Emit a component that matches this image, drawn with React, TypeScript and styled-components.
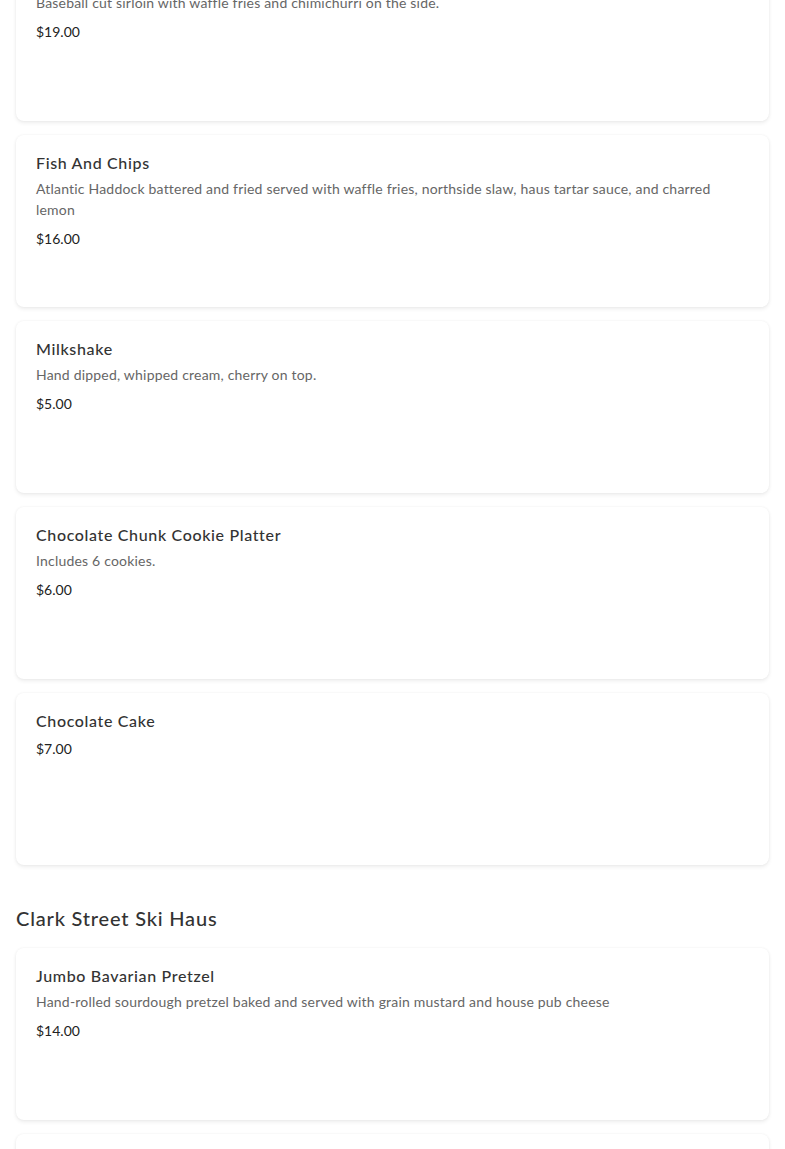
import React from "react";
import styled, { createGlobalStyle } from "styled-components";

interface MenuItem {
  name: string;
  description?: string;
  price: string;
}

interface MenuSection {
  title?: string;
  items: MenuItem[];
}

const GlobalStyle = createGlobalStyle`
  html, body {
    margin: 0;
    padding: 0;
    background-color: #ffffff;
    overflow: hidden;
  }
  body {
    font-family: "Lato", "Liberation Sans", sans-serif;
    -webkit-font-smoothing: antialiased;
  }
`;

const Page = styled.div`
  padding: 0 16px;
  margin-top: -51px;
`;

const Section = styled.section`
  display: flex;
  flex-direction: column;
`;

const SectionTitle = styled.h2`
  margin: 40px 0 17px;
  font-size: 20px;
  line-height: 26px;
  font-weight: 500;
  color: #333333;
  letter-spacing: 0.8px;
`;

const ItemList = styled.div`
  display: flex;
  flex-direction: column;
  gap: 14px;
`;

const Card = styled.div`
  background-color: #ffffff;
  border-radius: 8px;
  box-shadow: 0 2px 4px rgba(0, 0, 0, 0.07), 0 0 3px rgba(0, 0, 0, 0.05);
  min-height: 172px;
  box-sizing: border-box;
  padding: 18px 20px;
  display: flex;
  flex-direction: column;
`;

const ItemName = styled.div`
  font-size: 16px;
  line-height: 20px;
  font-weight: 500;
  color: #333333;
  letter-spacing: 0.65px;
`;

const ItemDescription = styled.div`
  margin-top: 5px;
  margin-bottom: 1px;
  font-size: 14px;
  line-height: 21px;
  color: #666666;
  letter-spacing: 0.2px;
`;

const Price = styled.div`
  margin-top: 8px;
  font-size: 14px;
  line-height: 20px;
  color: #222222;
`;

const sections: MenuSection[] = [
  {
    items: [
      {
        name: "Steak Frites",
        description:
          "Baseball cut sirloin with waffle fries and chimichurri on the side.",
        price: "$19.00",
      },
      {
        name: "Fish And Chips",
        description:
          "Atlantic Haddock battered and fried served with waffle fries, northside slaw, haus tartar sauce, and charred lemon",
        price: "$16.00",
      },
      {
        name: "Milkshake",
        description: "Hand dipped, whipped cream, cherry on top.",
        price: "$5.00",
      },
      {
        name: "Chocolate Chunk Cookie Platter",
        description: "Includes 6 cookies.",
        price: "$6.00",
      },
      { name: "Chocolate Cake", price: "$7.00" },
    ],
  },
  {
    title: "Clark Street Ski Haus",
    items: [
      {
        name: "Jumbo Bavarian Pretzel",
        description:
          "Hand-rolled sourdough pretzel baked and served with grain mustard and house pub cheese",
        price: "$14.00",
      },
      { name: "Haus Burger", price: "$15.00" },
    ],
  },
];

const App: React.FC = () => {
  return (
    <>
      <GlobalStyle />
      <Page>
        {sections.map((section, sIndex) => (
          <Section key={sIndex}>
            {section.title && <SectionTitle>{section.title}</SectionTitle>}
            <ItemList>
              {section.items.map((item, index) => (
                <Card key={index}>
                  <ItemName>{item.name}</ItemName>
                  {item.description && (
                    <ItemDescription>{item.description}</ItemDescription>
                  )}
                  <Price>{item.price}</Price>
                </Card>
              ))}
            </ItemList>
          </Section>
        ))}
      </Page>
    </>
  );
};

export default App;
